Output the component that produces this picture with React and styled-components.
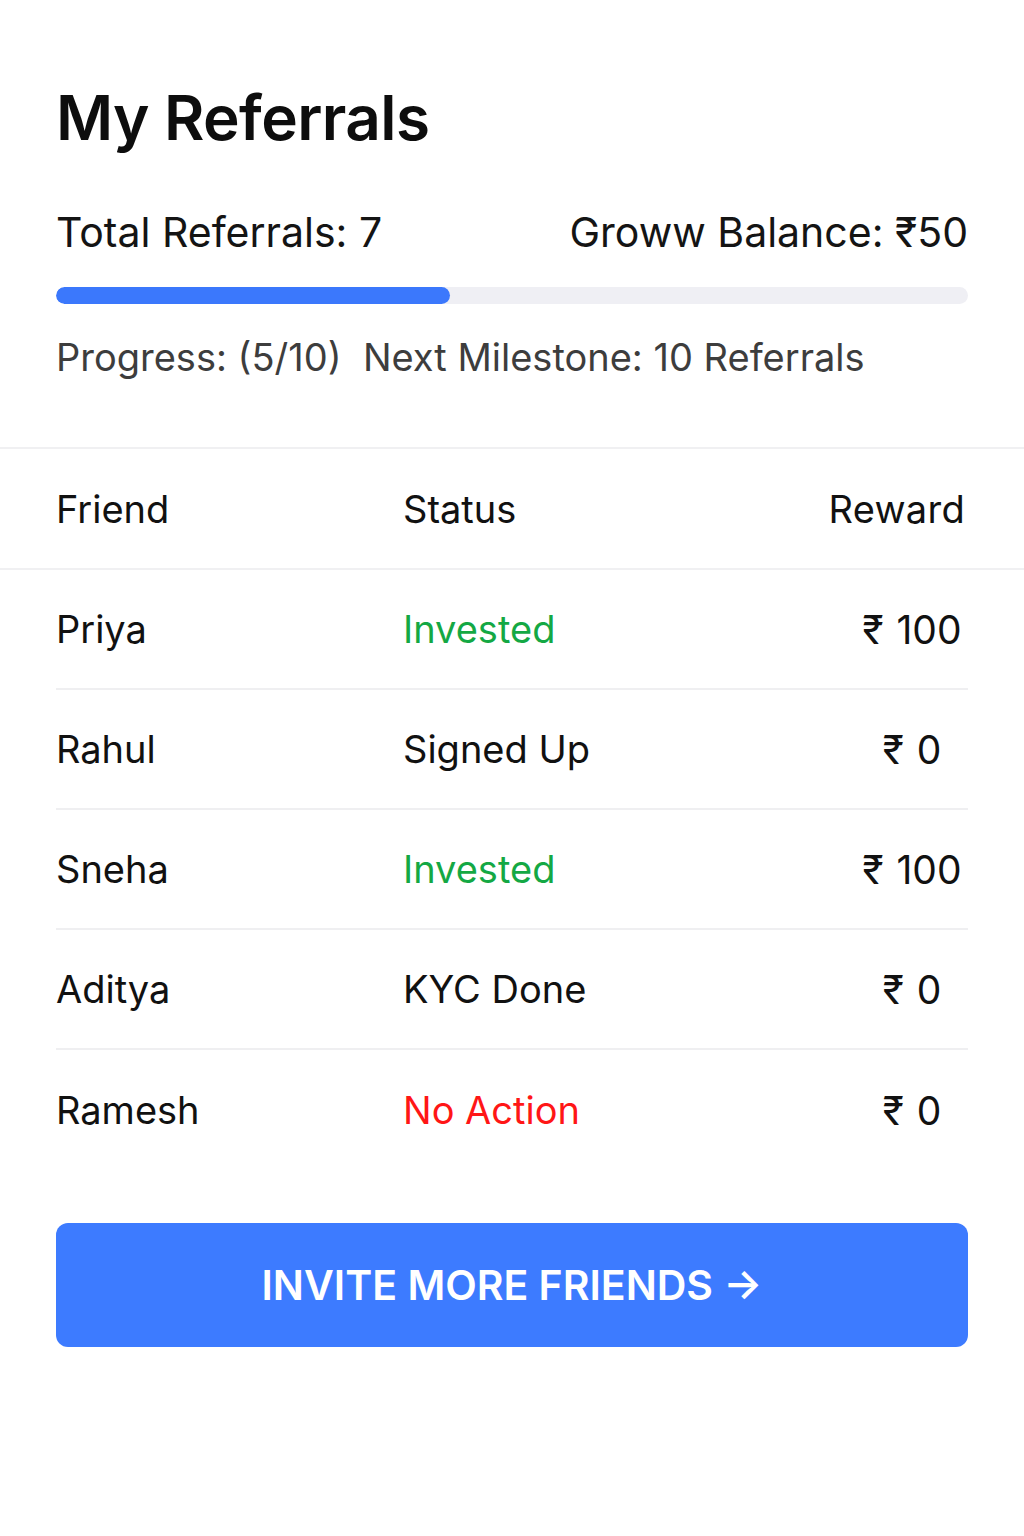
import React from "react";
import styled, { createGlobalStyle } from "styled-components";

const GlobalStyle = createGlobalStyle`
  body {
    margin: 0;
    background: #ffffff;
    font-family: Inter, "Noto Sans", "DejaVu Sans", sans-serif;
    color: #111111;
  }
`;

const Page = styled.div`
  width: 1024px;
  min-height: 1536px;
  background: #ffffff;
`;

const Summary = styled.section`
  padding: 81px 56px 68px;
`;

const Title = styled.h1`
  margin: 0;
  font-size: 62px;
  line-height: 74px;
  font-weight: 600;
  letter-spacing: -0.6px;
  color: #0d0d0d;
`;

const StatsRow = styled.div`
  display: flex;
  justify-content: space-between;
  align-items: center;
  margin-top: 53px;
  font-size: 41px;
  line-height: 48px;
  color: #141414;
`;

const Track = styled.div`
  margin-top: 31px;
  height: 17px;
  border-radius: 9px;
  background: #efeff4;
  overflow: hidden;
`;

const Fill = styled.div`
  height: 100%;
  border-radius: 9px;
  background: #3b78fc;
`;

const ProgressText = styled.p`
  margin: 31px 0 0;
  font-size: 38px;
  line-height: 44px;
  color: #3d3d3d;
`;

const Grid = styled.div`
  display: grid;
  grid-template-columns: 347px 1fr 112px;
  align-items: center;
`;

const HeaderRow = styled(Grid)`
  height: 119px;
  padding: 0 56px;
  border-top: 2px solid #f0f0f2;
  border-bottom: 2px solid #f0f0f2;
  font-size: 38px;
  color: #111111;
`;

const Rows = styled.div`
  padding: 0 56px;
`;

const Row = styled(Grid)`
  height: 120px;
  font-size: 38px;
  border-bottom: ${({ last }) => (last ? "none" : "2px solid #efeff1")};
  box-sizing: border-box;
`;

const RewardHead = styled.span`
  justify-self: end;
  white-space: nowrap;
  margin-right: 3px;
  letter-spacing: 0.3px;
`;

const Status = styled.span`
  color: ${({ tone }) =>
    tone === "green" ? "#14a844" : tone === "red" ? "#ff1616" : "#111111"};
`;

const Reward = styled.span`
  justify-self: center;
  white-space: nowrap;
  font-size: 39px;
  word-spacing: 2px;
`;

const ButtonWrap = styled.div`
  padding: 53px 56px 0;
`;

const InviteButton = styled.button`
  width: 100%;
  height: 124px;
  border: none;
  border-radius: 12px;
  background: #3d7bff;
  color: #ffffff;
  font-family: Inter, "Noto Sans", sans-serif;
  font-size: 41px;
  font-weight: 600;
  cursor: pointer;
`;

const referrals = [
  { name: "Priya", status: "Invested", tone: "green", reward: "₹ 100" },
  { name: "Rahul", status: "Signed Up", tone: "dark", reward: "₹ 0" },
  { name: "Sneha", status: "Invested", tone: "green", reward: "₹ 100" },
  { name: "Aditya", status: "KYC Done", tone: "dark", reward: "₹ 0" },
  { name: "Ramesh", status: "No Action", tone: "red", reward: "₹ 0" },
];

export default function App() {
  const progress = 5 / 10;
  return (
    <Page>
      <GlobalStyle />
      <Summary>
        <Title>My Referrals</Title>
        <StatsRow>
          <span>Total Referrals: 7</span>
          <span>Groww Balance: ₹50</span>
        </StatsRow>
        <Track>
          <Fill style={{ width: `${progress * 86.5}%` }} />
        </Track>
        <ProgressText>Progress: (5/10)&nbsp; Next Milestone: 10 Referrals</ProgressText>
      </Summary>
      <HeaderRow>
        <span>Friend</span>
        <span>Status</span>
        <RewardHead>Reward</RewardHead>
      </HeaderRow>
      <Rows>
        {referrals.map((r, i) => (
          <Row key={r.name} last={i === referrals.length - 1}>
            <span>{r.name}</span>
            <Status tone={r.tone}>{r.status}</Status>
            <Reward>{r.reward}</Reward>
          </Row>
        ))}
      </Rows>
      <ButtonWrap>
        <InviteButton>INVITE MORE FRIENDS →</InviteButton>
      </ButtonWrap>
    </Page>
  );
}
